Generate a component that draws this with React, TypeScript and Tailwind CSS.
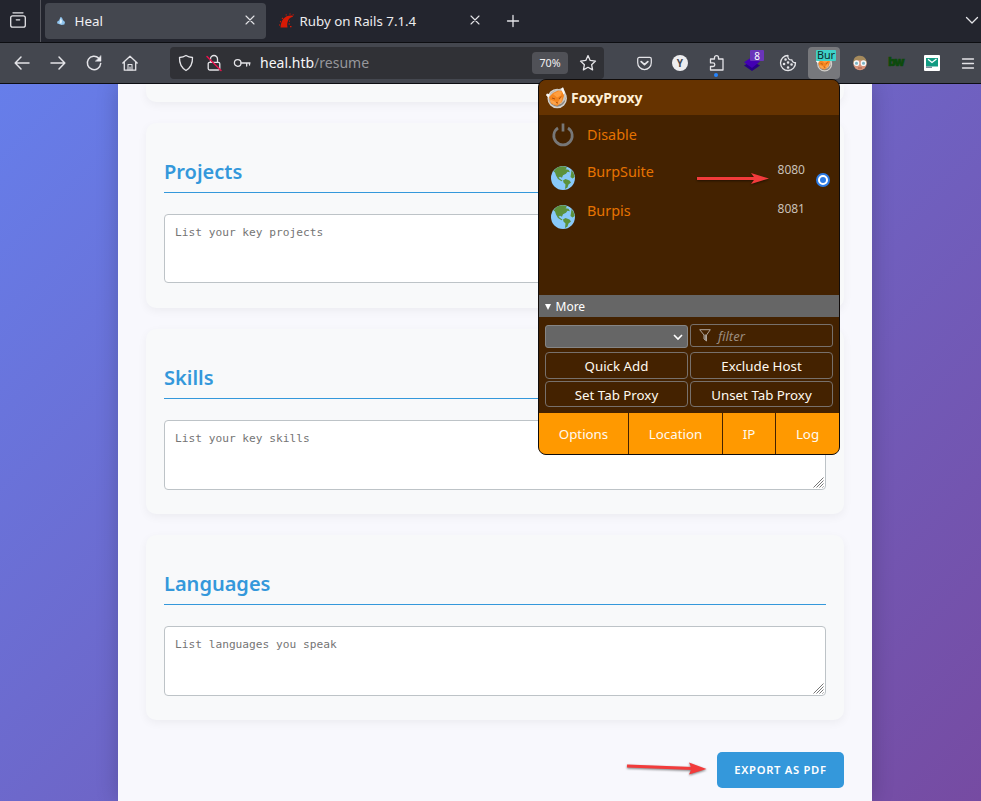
import React from "react";

const line = { fill: "none", stroke: "#e4e4e8", strokeWidth: 1.3, strokeLinecap: "round", strokeLinejoin: "round" } as const;

function Cell({ children, active = false }: { children: React.ReactNode; active?: boolean }) {
  return (
    <div className="relative flex h-8 w-9 shrink-0 items-center justify-center">
      {active && <span className="absolute inset-x-0.5 inset-y-0 rounded bg-[#77787c]" />}
      {children}
    </div>
  );
}

function Icon({ children, size = 18, className = "" }: { children: React.ReactNode; size?: number; className?: string }) {
  return (
    <svg width={size} height={size} viewBox="0 0 18 18" className={"relative shrink-0 " + className} {...line}>
      {children}
    </svg>
  );
}

function Close() {
  return (
    <svg width="10" height="10" viewBox="0 0 10 10" className="relative -top-px shrink-0" {...line} strokeWidth={1.1}>
      <path d="M1 1l8 8M9 1L1 9" />
    </svg>
  );
}

function Fox({ size = 22 }: { size?: number }) {
  return (
    <svg width={size} height={size} viewBox="0 0 22 22" className="relative shrink-0">
      <circle cx="11.200" cy="11.500" r="9" fill="#8a847e" stroke="#d4d1cc" strokeWidth="1.500" />
      <path d="M0 8l4-1 5-4 6-1.500L17 .5 19.500 6l-.5 7-4 4-7 1-4-3-1-5z" fill="#c9c5bf" />
      <path d="M3 10l4-4 5-2.500 5 .500 1 5-2 6-5 4-6-2.500z" fill="#f5861f" />
      <path d="M7 7l6-3 3 .5-1 4-4 2z" fill="#ff9f40" />
      <path d="M4 12.500l5 2 3 3-4 0-3-2zM12 15l4-5-.5 5-3 3z" fill="#fba34c" />
      <path d="M6 11l3 1M13 12l2-2.500M10 15.500l2 .5" fill="none" stroke="#a44c10" strokeWidth=".9" />
      <path d="M0 8l1-1.500 3 1L2.500 11zM15 2l2-1.800L19 6l-1.500 1.500z" fill="#faf9f7" />
    </svg>
  );
}

function TabBar() {
  return (
    <header className="flex h-[43px] shrink-0 items-center border-b border-[#0d0e12] bg-[#23252e]">
      <div className="flex h-[42px] w-[41px] shrink-0 items-center border-r border-[#55565d] pl-[9px]">
        <Icon className="-top-px">
          <rect x="1.700" y="4.800" width="14.600" height="11.400" rx="2" />
          <path d="M4 1.800h10M7.300 8.800h3.400" />
        </Icon>
      </div>
      <div className="ml-1 flex h-9 w-[221px] shrink-0 items-center rounded bg-[#44474f] pl-[11px] pr-[11px]">
        <svg width="10" height="10" viewBox="0 0 10 10">
          <path d="M4.500 1c1.500.2 2 1.500 2.400 3L9 6l-.6 2.500L5.500 9 1 7.300l.5-2L3 4.500z" fill="#8fc4ee" />
          <path d="M4.500 2.500l1.500 2-.5 3H3.500z" fill="#e4f5ff" />
        </svg>
        <span className="relative top-[0.5px] ml-[8.500px] flex-1 text-[13.400px] text-[#f0f0f2]">Heal</span>
        <Close />
      </div>
      <div className="flex h-9 w-[224px] shrink-0 items-center pl-3 pr-[10px]">
        <svg width="17" height="16" viewBox="0 0 17 16">
          <path d="M2.500 14.500C3 7 6.500 2 14.500 2.500l.5 1.200C10.500 4.500 8.500 9 9.500 14.500z" fill="#d81a05" />
          <path d="M1 12h1M2 8.500l1 .4M4 5l.8.700M8 1.500l.3.900M12 .6v1M15.500 1.500l-.7.500M10.500 11h1.500M11 8l1 .3M12 13.700h1.500" stroke="#d81a05" strokeWidth="1.200" />
        </svg>
        <span className="relative top-[0.5px] ml-[4.500px] flex-1 whitespace-nowrap text-[13.300px] text-[#ececee]">Ruby on Rails 7.1.4</span>
        <Close />
      </div>
      <svg width="14" height="14" viewBox="0 0 14 14" className="ml-[16px] mt-[-1px]" {...line}>
        <path d="M7 1.500v11M1.500 7h11" />
      </svg>
      <svg width="14" height="14" viewBox="0 0 14 14" className="ml-auto mr-[2px] mt-[-2px]" {...line}>
        <path d="M1.500 4.500L7 10l5.500-5.500" />
      </svg>
    </header>
  );
}

function Toolbar() {
  return (
    <nav className="flex h-[41px] shrink-0 items-center border-b border-[#0d0e12] bg-[#44474f] pl-1">
      <Cell><Icon><path d="M16 9H2.500M8 3L2.200 9 8 15" strokeWidth="1.500" /></Icon></Cell>
      <Cell><Icon><path d="M2 9h13.500M10 3l5.800 6-5.800 6" strokeWidth="1.500" /></Icon></Cell>
      <Cell>
        <Icon>
          <path d="M13.800 4.200A6.700 6.700 0 1 0 15.700 9.500" strokeWidth="1.500" />
          <path d="M16 1.800v5.400h-5.400z" fill="#ececf0" strokeWidth=".5" />
        </Icon>
      </Cell>
      <Cell>
        <Icon className="-left-[0.5px]">
          <path d="M1.800 9L9 2.200 16.200 9M3.300 8v8.200h11.400V8" />
          <path d="M7 16v-5.500h4V16M9 13v3" strokeWidth="1.100" />
        </Icon>
      </Cell>
      <div className="ml-[22px] flex h-8 w-[434px] shrink-0 items-center rounded bg-[#303136] pl-[7px] pr-[7px]">
        <Icon><path d="M9 1.500c2 1.300 4 1.900 6.500 2 .2 6-1.500 10-6.500 13C4 13.500 2.300 9.500 2.500 3.500 5 3.400 7 2.800 9 1.500z" /></Icon>
        <Icon className="ml-[10px]">
          <rect x="3.200" y="8.300" width="11.600" height="7.700" rx="1.500" />
          <path d="M5.500 8V5a3.500 3.500 0 0 1 7 0v3" />
          <path d="M2 2.500l14 14" stroke="#e8134e" strokeWidth="1.500" />
        </Icon>
        <Icon className="ml-[10px]">
          <circle cx="4.700" cy="9" r="3.300" />
          <path d="M8 9h9M13.700 9v3M16.500 9v2" />
        </Icon>
        <span className="relative -top-px ml-[9px] text-[14px] text-[#f7f7f8]">heal.htb<span className="text-[#96979b]">/resume</span></span>
        <span className="ml-auto flex h-[22px] w-9 items-center justify-center rounded-sm bg-[#505157] text-[10.700px] text-[#f0f0f2]">70%</span>
        <Icon className="ml-[11px]">
          <path d="M9 1.600l2.200 4.800 5.300.700-3.900 3.600 1 5.200L9 13.300l-4.600 2.600 1-5.200L1.500 7.100l5.300-.700z" />
        </Icon>
      </div>
      <div className="ml-[22px] flex">
        <Cell>
          <Icon size={17}>
            <path d="M3.500 2.500h11c1 0 1.700.700 1.700 1.700v4a7.200 7.200 0 0 1-14.400 0v-4c0-1 .700-1.700 1.700-1.700z" />
            <path d="M5.500 7L9 10.200 12.500 7" strokeWidth="1.900" />
          </Icon>
        </Cell>
        <Cell><span className="flex size-4 items-center justify-center rounded-full bg-[#ededef] text-[10px] font-bold text-[#44474f]">Y</span></Cell>
        <Cell>
          <Icon>
            <path d="M7.500 5V3.600a2 2 0 0 1 4 0V5H16v11H3.500v-3.500H6a1.700 1.700 0 0 0 0-3.600H3.500V5z" />
          </Icon>
          <span className="absolute bottom-[2px] left-4 size-1 rounded-full bg-[#2685ff]" />
        </Cell>
        <Cell>
          <svg width="18" height="18" viewBox="0 0 18 18">
            <path d="M9 7l8 4.500L9 17l-8-5.500z" fill="#280185" />
            <path d="M9 3l8 4.500L9 14 1 8.200z" fill="#4300b4" />
          </svg>
          <span className="absolute left-4 top-[3px] flex h-[11px] w-[14px] items-center justify-center rounded-[1px] bg-[#6a35b9] text-[10px] leading-none text-white">8</span>
        </Cell>
        <Cell>
          <Icon>
            <path d="M9 1.500a7.500 7.500 0 1 0 7.500 7.200 3 3 0 0 1-3.600-2.900A3.300 3.300 0 0 1 9 1.500z" />
            <path d="M6.500 5.500h.1M5 10h.1M9 8.500h.1M12.500 10.500h.1M9 13.500h.1" strokeWidth="2.500" />
          </Icon>
        </Cell>
        <Cell active>
          <Fox size={17} />
          <span className="absolute left-[10px] top-[3px] flex h-[11px] w-5 items-center justify-center rounded-[1px] bg-[#3fd2c7] text-[10.800px] leading-none text-[#102a2a]">Bur</span>
        </Cell>
        <Cell>
          <svg width="16" height="16" viewBox="0 0 16 16">
            <circle cx="8" cy="8.500" r="6.700" fill="#d9937a" />
            <path d="M1.500 8C1 3 4 .7 8 .8S15 4 14.500 8L12 5.500 4 5z" fill="#a58a5c" />
            <circle cx="4.500" cy="8.200" r="2.200" fill="#7cb2c4" stroke="#f4f7f8" strokeWidth="1.300" />
            <circle cx="11.500" cy="8.200" r="2.200" fill="#7cb2c4" stroke="#f4f7f8" strokeWidth="1.300" />
            <path d="M6 13h4" stroke="#a45c48" />
          </svg>
        </Cell>
        <Cell><span className="font-['Inter'] text-[11.500px] font-black tracking-[-0.9px] text-[#0c4a0c] [-webkit-text-stroke:0.5px_#0c4a0c]">bw</span></Cell>
        <Cell>
          <svg width="16" height="16" viewBox="0 0 16 16">
            <rect width="16" height="16" rx="1" fill="#fff" />
            <path d="M2 3h12v8.500H2z" fill="#129b82" />
            <path d="M4 4.200l4 3.300 4.500-3.500" fill="none" stroke="#fff" strokeWidth="1.300" />
            <path d="M2 11.500h6v1.500H2z" fill="#7d8f9a" />
          </svg>
        </Cell>
      </div>
      <Cell><Icon size={18} className="top-[-0.5px]"><path d="M3.500 5h11M3.500 9.500h11M3.500 14h11" /></Icon></Cell>
    </nav>
  );
}

function Section({ title, hint, short = false }: { title: string; hint: string; short?: boolean }) {
  return (
    <section className="h-[185px] shrink-0 rounded-[10px] bg-[#f8f9fa] px-[18px] pt-[35px] shadow-[0_3px_10px_rgba(0,0,0,0.05)]">
      <h2 className="h-[35px] border-b border-[#3498db] text-[20px] font-semibold leading-[28px] text-[#3498db]">{title}</h2>
      <div className={(short ? "h-[69px]" : "h-[70px]") + " relative mt-[21px] rounded-[4px] border border-[#bdc3c7] bg-white px-[10px] pt-[10px] font-['DejaVu_Sans_Mono',monospace] text-[11.200px] leading-[15px] text-[#757575]"}>
        {hint}
        <svg width="11" height="11" viewBox="0 0 11 11" className="absolute bottom-px right-px" stroke="#777" strokeWidth="1">
          <path d="M.5 10.500l10-10M3.500 10.500l7-7M6.500 10.500l4-4M9.500 10.500l1-1" />
        </svg>
      </div>
    </section>
  );
}

function Arrow({ className, d, head }: { className: string; d: string; head: string }) {
  return (
    <svg width="82" height="16" viewBox="0 0 82 16" className={"absolute drop-shadow-[0_1px_1px_rgba(0,0,0,0.5)] " + className}>
      <path d={d} stroke="#f23b3b" strokeWidth="3" />
      <path d={head} fill="#f23b3b" />
    </svg>
  );
}

function Globe() {
  return (
    <svg width="24" height="24" viewBox="0 0 24 24">
      <circle cx="12" cy="12" r="12" fill="#88c9f9" />
      <path d="M5 2.500C7 1 9.500.2 12 .2l2.500.5 1.500 1-1.500 1.500 3 .5 1.500 2.500-2.500-.5-1.500 2-3 1.500-1 2.500-2-1-1.500 1 2 1.500 2 1.500-1 .5L7 13 5 9.500 4 6.500l-1.500-1z" fill="#5c913b" />
      <path d="M12 14.500l2.500-1.500 4 1.500 1.500 2-2.500 2-1 3-2.500 1.500.5-4.500-2-2zM20.500 4l2 3 1.200 4-2.200 1.500-2-1.500.5-3z" fill="#5c913b" />
    </svg>
  );
}

function ProxyRow({ name, port, selected = false }: { name: string; port: string; selected?: boolean }) {
  return (
    <div className="flex h-[39px] pl-3 pr-[9px]">
      <div className="mt-[11px] h-6 w-6"><Globe /></div>
      <span className="ml-3 mt-[7px] text-[14.400px] leading-5 text-[#e67300]">{name}</span>
      <span className="ml-auto mt-[5px] text-[12px] leading-5 text-[#c8c0b8]">{port}</span>
      <span className="ml-[11px] mt-[18px] w-[14px]">
        {selected && <span className="flex size-[14px] items-center justify-center rounded-full border-[2px] border-[#2c7be5] bg-white"><i className="size-[6px] rounded-full bg-[#2c7be5]" /></span>}
      </span>
    </div>
  );
}

const btn = "flex items-center justify-center rounded-[4px] border border-[#77706b] text-[13.300px] text-[#fffaf0]";

function ProxyPopup() {
  return (
    <aside className="absolute left-[538px] top-[79px] flex h-[376px] w-[302px] flex-col overflow-hidden rounded-[8px] border border-[#100c0b] bg-[#442200]">
      <div className="flex h-[35px] shrink-0 items-center bg-[#663300] pl-[7px]">
        <Fox />
        <b className="ml-[3px] text-[14px] font-bold leading-[21px] text-[#ffefd5]">FoxyProxy</b>
      </div>
      <div className="h-[180px] shrink-0">
        <div className="flex h-[40px] items-center pl-3">
          <svg width="24" height="24" viewBox="0 0 24 24" fill="none" stroke="#777" strokeWidth="2.700">
            <path d="M7 5A9.200 9.200 0 1 0 17 5M12 .5v8" />
          </svg>
          <span className="ml-3 text-[14.400px] text-[#e67300]">Disable</span>
        </div>
        <ProxyRow name="BurpSuite" port="8080" selected />
        <ProxyRow name="Burpis" port="8081" />
      </div>
      <div className="flex h-[22px] shrink-0 items-center bg-[#666] pl-[6px] pt-px text-[12px] text-white">
        <svg width="6" height="6" viewBox="0 0 6 6"><path d="M0 0h6L3 6z" fill="#fff" /></svg>
        <span className="ml-[4.500px]">More</span>
      </div>
      <div className="grid h-[96px] shrink-0 grid-cols-[143px_143px] grid-rows-[24px_27px_26px] gap-x-[2px] pl-[6px] pt-[7px]">
        <div className="mt-[1px] flex h-[23px] items-center justify-end rounded-[3px] border border-[#858585] bg-[#666] pr-[4px]">
          <svg width="10" height="10" viewBox="0 0 10 10" fill="none" stroke="#fff" strokeWidth="1.600"><path d="M1 3l4 4 4-4" /></svg>
        </div>
        <div className="flex h-[23px] items-center rounded-[3px] border border-[#77706b] pl-2 text-[13px] italic text-[#9b8c7e]">
          <svg width="12" height="13" viewBox="0 0 12 13" fill="none" stroke="#b0a59b"><path d="M.7.700h10.600L7.500 6v6L5 10V6z" /><path d="M7 5.500v6l-1.500-1V5.500z" fill="#99928c" stroke="none" /></svg>
          <span className="ml-[7px] pt-[2px]">filter</span>
        </div>
        <div className={btn + " mt-[4px] h-[27px] pt-[2px]"}>Quick Add</div>
        <div className={btn + " mt-[4px] h-[27px] pt-[2px]"}>Exclude Host</div>
        <div className={btn + " mt-[6px] h-[26px] pt-[3px]"}>Set Tab Proxy</div>
        <div className={btn + " mt-[6px] h-[26px] pt-[3px]"}>Unset Tab Proxy</div>
      </div>
      <div className="grid flex-1 grid-cols-[89px_93px_52px_63px] gap-x-px bg-[#442200] text-[13.300px] text-[#fffaf0]">
        {["Options", "Location", "IP", "Log"].map((t) => (
          <div key={t} className="flex items-center justify-center bg-[#ff9900] pt-[2px]">{t}</div>
        ))}
      </div>
    </aside>
  );
}

export default function App() {
  return (
    <div className="relative flex h-[801px] w-[981px] flex-col overflow-hidden font-['Noto_Sans',sans-serif]">
      <TabBar />
      <Toolbar />
      <main className="min-h-0 flex-1 overflow-hidden bg-[linear-gradient(135deg,#667eea_0%,#764ba2_100%)]">
        <div className="ml-[118px] flex h-full w-[754px] flex-col gap-[21px] bg-[#f8f8fd] px-7 shadow-[0_0_21px_rgba(0,0,0,0.2)]">
          <div className="h-[18px] shrink-0 rounded-b-[10px] bg-[#f8f9fa] shadow-[0_3px_10px_rgba(0,0,0,0.05)]" />
          <Section title="Projects" hint="List your key projects" short />
          <Section title="Skills" hint="List your key skills" />
          <Section title="Languages" hint="List languages you speak" />
          <button className="mt-[11px] h-9 w-[127px] shrink-0 self-end rounded-[5px] bg-[#3498db] text-[11.200px] font-semibold tracking-[0.7px] text-white">EXPORT AS PDF</button>
        </div>
      </main>
      <ProxyPopup />
      <Arrow className="left-[697px] top-[171px]" d="M0 7.500h60" head="M54 2l18 5.500L54 13l4-5.500z" />
      <Arrow className="left-[627px] top-[760px]" d="M0 6l66 2.500" head="M62 2.500l17.500 6.500-17.500 5.500 2.500-6z" />
    </div>
  );
}
